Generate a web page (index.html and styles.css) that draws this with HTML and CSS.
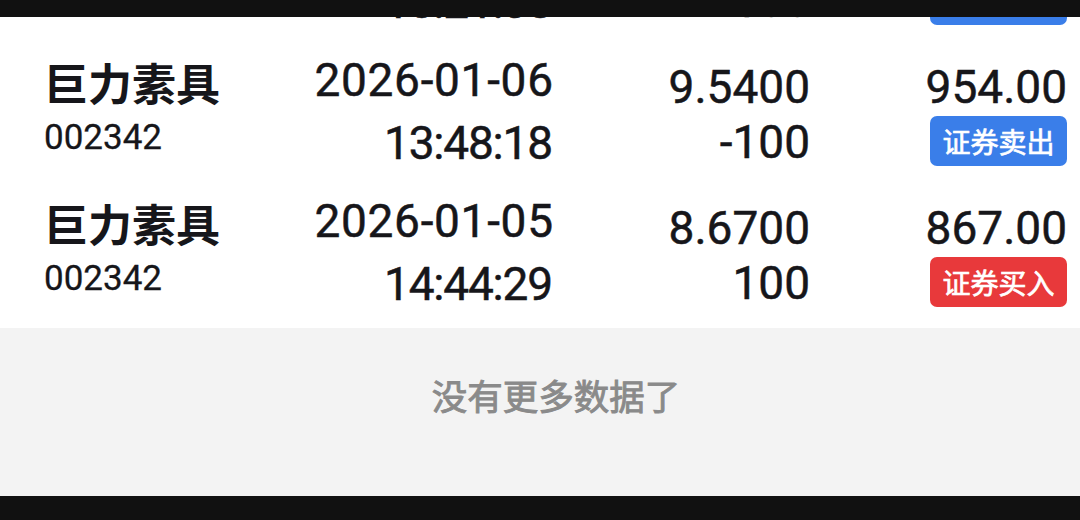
FILE: index.html
```html
<!DOCTYPE html>
<html lang="zh-CN">
<head>
<meta charset="utf-8">
<title>成交记录</title>
<link rel="stylesheet" href="styles.css">
</head>
<body>
<div class="screen">
  <div class="notch-bar"></div>
  <div class="scroller">
    <ul class="trade-list">
      <li class="trade">
        <div class="cell cell-name"><span class="name">巨力素具</span><span class="code">002342</span></div>
        <div class="cell cell-date"><span class="num date">2026-01-07</span><span class="num time">10:21:38</span></div>
        <div class="cell cell-price"><span class="num">9.8800</span><span class="num">-100</span></div>
        <div class="cell cell-amount"><span class="num">988.00</span><span class="badge badge-sell">证券卖出</span></div>
      </li>
      <li class="trade">
        <div class="cell cell-name"><span class="name">巨力素具</span><span class="code">002342</span></div>
        <div class="cell cell-date"><span class="num date">2026-01-06</span><span class="num time">13:48:18</span></div>
        <div class="cell cell-price"><span class="num">9.5400</span><span class="num">-100</span></div>
        <div class="cell cell-amount"><span class="num">954.00</span><span class="badge badge-sell">证券卖出</span></div>
      </li>
      <li class="trade">
        <div class="cell cell-name"><span class="name">巨力素具</span><span class="code">002342</span></div>
        <div class="cell cell-date"><span class="num date">2026-01-05</span><span class="num time">14:44:29</span></div>
        <div class="cell cell-price"><span class="num">8.6700</span><span class="num">100</span></div>
        <div class="cell cell-amount"><span class="num">867.00</span><span class="badge badge-buy">证券买入</span></div>
      </li>
    </ul>
    <div class="no-more">没有更多数据了</div>
  </div>
  <div class="home-bar"></div>
</div>
</body>
</html>
```

FILE: styles.css
```css
* { box-sizing: border-box; }
html, body { margin: 0; padding: 0; }
body {
  width: 1080px;
  height: 520px;
  overflow: hidden;
  background: #111;
  font-family: "Roboto", "Noto Sans CJK SC", sans-serif;
  color: #16161a;
}
.screen {
  position: relative;
  width: 1080px;
  height: 520px;
  display: flex;
  flex-direction: column;
  overflow: hidden;
}
.notch-bar {
  position: absolute;
  left: 0; top: 0; right: 0;
  height: 17px;
  background: #111;
  z-index: 2;
}
.scroller {
  flex: 1;
  display: flex;
  flex-direction: column;
  overflow: hidden;
  background: #f3f3f3;
}
.trade-list {
  list-style: none;
  margin: -95px 0 0 0;
  padding: 0;
  background: #fff;
}
.trade {
  height: 141px;
  display: grid;
  grid-template-columns: 250px 259px 257px 257px;
  padding: 0 13px 0 44px;
}
.cell {
  display: flex;
  flex-direction: column;
}
.cell-date, .cell-price, .cell-amount { align-items: flex-end; }
.num {
  font-size: 46px;
  line-height: 46px;
  font-weight: 400;
  -webkit-text-stroke: 0.5px #16161a;
  white-space: nowrap;
}
.date { letter-spacing: 0.7px; margin-right: -0.7px; }
.time { letter-spacing: -1.2px; margin-right: 1.2px; }
.cell-name { padding-top: 14px; }
.name {
  font-family: "Noto Sans CJK SC", sans-serif;
  font-size: 44px;
  line-height: 44px;
  font-weight: 700;
  white-space: nowrap;
}
.code {
  margin-top: 16px;
  font-size: 35px;
  line-height: 35px;
  -webkit-text-stroke: 0.3px #16161a;
}
.cell-date { padding-top: 11px; gap: 17px; }
.cell-price { padding-top: 18px; gap: 9px; }
.cell-amount { padding-top: 18px; gap: 6px; }
.badge {
  display: inline-flex;
  align-items: center;
  justify-content: center;
  width: 137px;
  height: 50px;
  border-radius: 7px;
  color: #fff;
  font-family: "Noto Sans CJK SC", sans-serif;
  font-size: 28px;
  line-height: 1;
  font-weight: 400;
  -webkit-text-stroke: 0.7px #fff;
}
.badge-sell { background: #3a7ee9; }
.badge-buy { background: #e8393b; }
.no-more {
  padding: 49px 0 0 32px;
  text-align: center;
  font-family: "Noto Sans CJK SC", sans-serif;
  font-size: 35.5px;
  line-height: 36px;
  font-weight: 400;
  -webkit-text-stroke: 0.9px #8a8a8a;
  color: #8a8a8a;
}
.home-bar {
  height: 24px;
  background: #111;
  flex-shrink: 0;
}
```
